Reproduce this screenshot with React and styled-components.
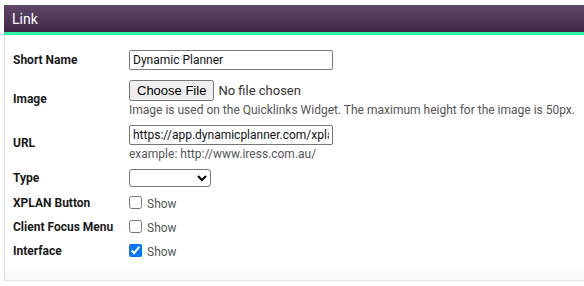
import styled, { createGlobalStyle } from 'styled-components';

const GlobalStyle = createGlobalStyle`
	body {
		margin: 0;
		background: #fff;
		font-family: Roboto, "Liberation Sans", Arial, sans-serif;
		overflow: hidden;
	}
`;

const Page = styled.div`
	padding: 5px 0 0 4px;
`;

const Header = styled.div`
	height: 27px;
	background: linear-gradient(#5f4867, #3e2647);
	border-bottom: 3px solid #2ff2ab;
	color: #fff;
	font-size: 14px;
	display: flex;
	align-items: center;
	padding-left: 8px;
`;

const Panel = styled.div`
	border-left: 1px solid #dcdcdc;
	border-bottom: 1px solid #e2e2e2;
	padding-top: 12px;
`;

const Row = styled.div`
	display: grid;
	grid-template-columns: 124px 1fr;
	align-items: center;
	padding: ${(props) => props.pad || '4px 0'};
`;

const Label = styled.div`
	padding-left: 8px;
	font-size: 12px;
	font-weight: bold;
	color: #1a1a1a;
`;

const Field = styled.div`
	display: flex;
	flex-direction: column;
	align-items: flex-start;
`;

const TextInput = styled.input`
	box-sizing: border-box;
	width: 204px;
	height: 20px;
	margin: 0;
	padding: 1px 3px;
	border: 1px solid #767676;
	border-radius: 2px;
	font-family: Roboto, "Liberation Sans", Arial, sans-serif;
	font-size: 12px;
	color: #111;
`;

const FileInput = styled.input`
	margin: 0;
	font-family: Roboto, "Liberation Sans", Arial, sans-serif;
	font-size: 13px;
	color: #333;
`;

const Help = styled.div`
	margin-top: 2px;
	font-size: 12px;
	line-height: 14px;
	color: #555;
`;

const Select = styled.select`
	box-sizing: border-box;
	width: 82px;
	height: 18px;
	margin: 0;
	border: 1px solid #767676;
	border-radius: 3px;
	background: #fff;
	font-size: 12px;
`;

const Check = styled.label`
	display: flex;
	align-items: center;
	font-size: 12px;
	color: #555;

	input {
		margin: 0 5px 0 0;
		width: 13px;
		height: 13px;
	}

	span {
		padding-top: 3px;
	}
`;

const Footer = styled.div`
	height: 17px;
	background: linear-gradient(#fff, #f7f7f7);
`;

function CheckRow({ label, checked }) {
	return (
		<Row pad="3px 0 4px">
			<Label>{label}</Label>
			<Check>
				<input type="checkbox" defaultChecked={checked} />
				<span>Show</span>
			</Check>
		</Row>
	);
}

function App() {
	return (
		<>
			<GlobalStyle />
			<Page>
				<Header>Link</Header>
				<Panel>
					<Row pad="3px 0 5px">
						<Label>Short Name</Label>
						<Field>
							<TextInput defaultValue="Dynamic Planner" />
						</Field>
					</Row>
					<Row pad="5px 0 3px">
						<Label>Image</Label>
						<Field>
							<FileInput type="file" />
							<Help>
								Image is used on the Quicklinks Widget. The maximum height for the image is 50px.
							</Help>
						</Field>
					</Row>
					<Row pad="5px 0 3px">
						<Label>URL</Label>
						<Field>
							<TextInput defaultValue="https://app.dynamicplanner.com/xplan" />
							<Help>example: http://www.iress.com.au/</Help>
						</Field>
					</Row>
					<Row pad="5px 0 4px">
						<Label>Type</Label>
						<Field>
							<Select>
								<option></option>
							</Select>
						</Field>
					</Row>
					<CheckRow label="XPLAN Button" />
					<CheckRow label="Client Focus Menu" />
					<CheckRow label="Interface" checked />
					<Footer />
				</Panel>
			</Page>
		</>
	);
}

export default App;
